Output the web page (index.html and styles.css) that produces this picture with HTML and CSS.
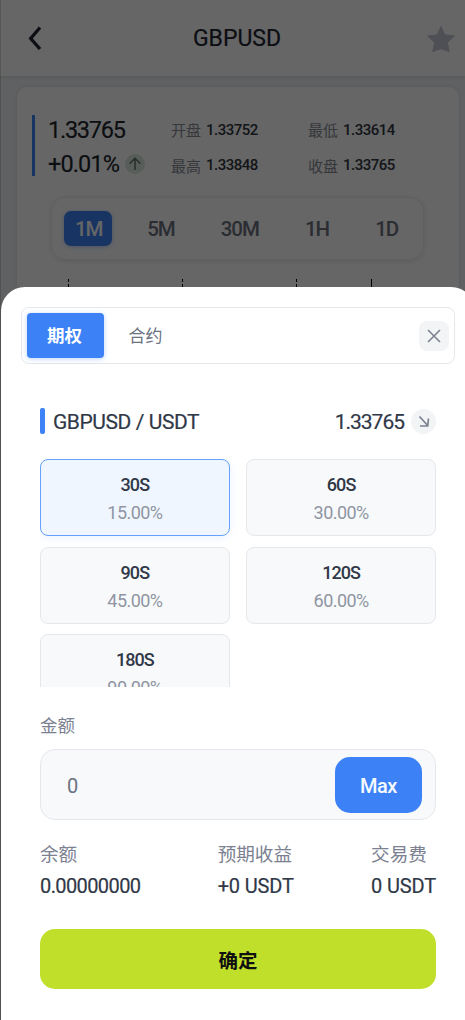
FILE: index.html
```
<!DOCTYPE html>
<html lang="zh-CN">
<head>
<meta charset="utf-8">
<title>GBPUSD</title>
<link rel="stylesheet" href="styles.css">
</head>
<body>
<div class="app">
  <header class="topbar">
    <svg class="back" width="14" height="26" viewBox="0 0 14 26"><path d="M12 1.500L2.700 12.500l9.300 10.500" fill="none" stroke="#1e2433" stroke-width="3.300"/></svg>
    <h1 class="title">GBPUSD</h1>
    <svg class="star" width="30" height="29" viewBox="0 0 30 29"><path d="M15 1.500l3.800 8.300 9.600 1.200-7.100 6.400 2 9.200L15 23.700l-8.300 2.900 2-9.200L1.600 11l9.600-1.200z" fill="#c3c8d4" stroke="#c3c8d4" stroke-width="1" stroke-linejoin="round"/></svg>
  </header>
  <main class="quote">
    <section class="summary">
      <div class="last">
        <div class="last-price">1.33765</div>
        <div class="change"><span>+0.01%</span><i class="up"><svg width="20" height="20" viewBox="0 0 20 20"><path d="M10 16V4.500M4.600 9.700L10 4.300l5.400 5.400" fill="none" stroke="#5d7568" stroke-width="1.500"/></svg></i></div>
      </div>
      <dl class="ohlc">
        <div><dt>开盘</dt><dd>1.33752</dd></div>
        <div><dt>最低</dt><dd>1.33614</dd></div>
        <div><dt>最高</dt><dd>1.33848</dd></div>
        <div><dt>收盘</dt><dd>1.33765</dd></div>
      </dl>
    </section>
    <nav class="periods">
      <span class="period active">1M</span><span class="period">5M</span><span class="period">30M</span><span class="period">1H</span><span class="period">1D</span>
    </nav>
    <svg class="chart" width="442" height="20" viewBox="0 0 442 20"><path d="M51.500 0v3m0 2v3m0 2v3M165.500 0v3m0 2v3m0 2v3M279.500 0v3m0 2v3m0 2v3M354.500 0v16" stroke="#000" stroke-width="1"/></svg>
  </main>
  <div class="mask"></div>
  <section class="sheet">
    <div class="tabs">
      <span class="tab active">期权</span>
      <span class="tab">合约</span>
      <button class="close"><svg width="16" height="16" viewBox="0 0 16 16"><path d="M2 2l12 12M14 2L2 14" stroke="#7b8191" stroke-width="1.600"/></svg></button>
    </div>
    <div class="body">
      <div class="pair">
        <i class="mark"></i>
        <span class="pair-name">GBPUSD / USDT</span>
        <span class="pair-price">1.33765</span>
        <i class="trend"><svg width="25" height="25" viewBox="0 0 25 25"><path d="M8.500 7.500l8.200 9M17.500 9.500L16.700 17H9" fill="none" stroke="#7b8191" stroke-width="1.700"/></svg></i>
      </div>
      <div class="options">
        <div class="option active"><b>30S</b><span>15.00%</span></div>
        <div class="option"><b>60S</b><span>30.00%</span></div>
        <div class="option"><b>90S</b><span>45.00%</span></div>
        <div class="option"><b>120S</b><span>60.00%</span></div>
        <div class="option"><b>180S</b><span>90.00%</span></div>
      </div>
      <div class="label">金额</div>
      <div class="amount"><span class="value">0</span><button class="max">Max</button></div>
      <div class="stats">
        <div><span>余额</span><strong class="balance">0.00000000</strong></div>
        <div><span>预期收益</span><strong>+0 USDT</strong></div>
        <div><span>交易费</span><strong>0 USDT</strong></div>
      </div>
      <button class="confirm">确定</button>
    </div>
  </section>
</div>
</body>
</html>
```
FILE: styles.css
```
* { box-sizing: border-box; margin: 0; padding: 0; }
body { overflow: hidden; font-family: Roboto, "Noto Sans CJK SC", sans-serif; color: #303847; }
button { border: 0; font-family: inherit; }
i { font-style: normal; }
svg { display: block; }
.app { position: relative; width: 465px; height: 1020px; overflow: hidden; background: #f0f3f5; }
.topbar { display: flex; align-items: center; height: 76px; padding: 2px 9px 0 27px; background: #fff; box-shadow: 0 1px 4px rgba(0,0,0,.12); }
.title { flex: 1; padding-left: 6px; text-align: center; font-size: 23px; line-height: 30px; font-weight: 400; color: #1e2433; -webkit-text-stroke: .2px; }
.back { margin-left: 1px; }
.quote { width: 442px; height: 500px; margin: 11px 0 0 17px; padding-top: 28px; background: #fff; border-radius: 10px; box-shadow: 0 0 4px rgba(0,0,0,.1); }
.summary { display: flex; height: 61px; margin-left: 15px; border-left: 3px solid #3c82f6; }
.last { width: 136px; padding-left: 13px; font-size: 23.500px; color: #20252e; -webkit-text-stroke: .150px; }
.last-price { height: 30px; line-height: 30px; letter-spacing: -1.250px; }
.change { display: flex; align-items: center; gap: 6px; height: 37px; letter-spacing: -.900px; white-space: nowrap; }
.up { width: 20px; height: 20px; border-radius: 50%; background: #d9ebe1; }
.ohlc { display: grid; grid-template-columns: 137px 110px; grid-template-rows: 35px 36px; height: 71px; margin-top: -3px; }
.ohlc div { display: flex; align-items: center; gap: 5px; }
.ohlc dt { font-size: 15px; color: #858b95; }
.ohlc dd { font-size: 15px; font-weight: 500; letter-spacing: -.500px; color: #303741; }
.periods { display: flex; align-items: center; justify-content: space-between; width: 373px; height: 63px; margin: 21px 0 0 34px; padding: 0 14px 0 12px; border: 1px solid #ebedef; border-radius: 14px; box-shadow: 0 1px 5px rgba(0,0,0,.1); }
.period { height: 35px; padding: 0 11px; line-height: 37px; font-size: 20.500px; font-weight: 500; letter-spacing: -1.100px; color: #6b7280; }
.period.active { padding: 0 10px 0 11px; width: 48px; border-radius: 7px; background: #3c82f6; color: #fff; box-shadow: 0 1px 4px rgba(60,130,246,.4); }
.chart { margin-top: 19px; }
.mask { position: absolute; inset: 0; background: rgba(0,0,0,.6); border-left: 1px solid rgba(0,0,0,.15); }
.sheet { position: absolute; left: 1px; top: 287px; width: 474px; height: 733px; padding: 20px; background: #fff; border-radius: 24px 24px 0 0; }
.tabs { display: flex; align-items: center; height: 57px; padding: 0 5px; border: 1px solid #e5e7eb; border-radius: 8px; }
.tab { width: 83px; height: 45px; line-height: 47px; text-align: center; font-size: 17px; color: #6b7280; }
.tab.active { width: 77px; border-radius: 4px; padding-right: 2px; font-size: 17.500px; font-weight: 700; background: #3c82f6; color: #fff; box-shadow: 0 1px 5px rgba(60,130,246,.35); }
.close { display: grid; place-items: center; width: 30px; height: 30px; margin-left: auto; border-radius: 8px; background: #f3f4f6; }
.body { padding: 44px 19px 0; }
.pair { display: flex; align-items: center; height: 26px; font-size: 21px; line-height: 28px; -webkit-text-stroke: .200px; }
.mark { width: 5px; height: 26px; margin-right: 8px; border-radius: 2px; background: #3c82f6; }
.pair-name { padding-top: 1px; letter-spacing: -.430px; }
.pair-price { padding-top: 1px; margin-left: auto; letter-spacing: -1px; }
.trend { width: 25px; height: 25px; margin-left: 7px; border-radius: 50%; background: #f3f4f6; }
.options { display: grid; grid-template-columns: 1fr 1fr; grid-auto-rows: 77px; gap: 10.400px 16.500px; height: 228px; margin-top: 25.400px; overflow: hidden; }
.option { display: flex; flex-direction: column; align-items: center; padding-top: 11px; border: 1px solid #e5e7eb; border-radius: 8px; background: #f8f9fb; }
.option.active { border-color: #65a1fa; background: #eff6ff; box-shadow: 0 2px 8px rgba(60,130,246,.1); }
.option b { font-size: 18px; line-height: 28px; font-weight: 500; letter-spacing: -.900px; }
.option span { font-size: 18px; line-height: 28px; font-weight: 400; letter-spacing: -.550px; color: #8f95a2; }
.label { height: 26px; margin-top: 26px; line-height: 26px; font-size: 17.500px; color: #7b8191; }
.amount { display: flex; align-items: center; height: 71px; margin-top: 10px; padding: 0 13px 0 26px; border: 1px solid #e5e7eb; border-radius: 15px; background: #f8f9fb; }
.value { padding-top: 2px; font-size: 20px; font-weight: 400; letter-spacing: -.500px; color: #6b7280; }
.max { width: 87px; height: 56px; margin-left: auto; padding-top: 2px; border-radius: 15px; font-size: 20px; font-weight: 500; letter-spacing: -.500px; background: #3c82f6; color: #f6faff; }
.stats { display: flex; justify-content: space-between; height: 62px; margin-top: 20px; }
.stats div { display: flex; flex-direction: column; }
.stats span { font-size: 18.600px; line-height: 31px; color: #7b8191; }
.stats strong { font-size: 20px; line-height: 31px; font-weight: 400; letter-spacing: -.150px; -webkit-text-stroke: .200px; }
.stats .balance { letter-spacing: -.600px; }
.confirm { display: block; width: 100%; height: 60px; margin-top: 27px; border-radius: 15px; font-size: 19.500px; font-weight: 700; color: #111; background: #c0df2a; }
```
